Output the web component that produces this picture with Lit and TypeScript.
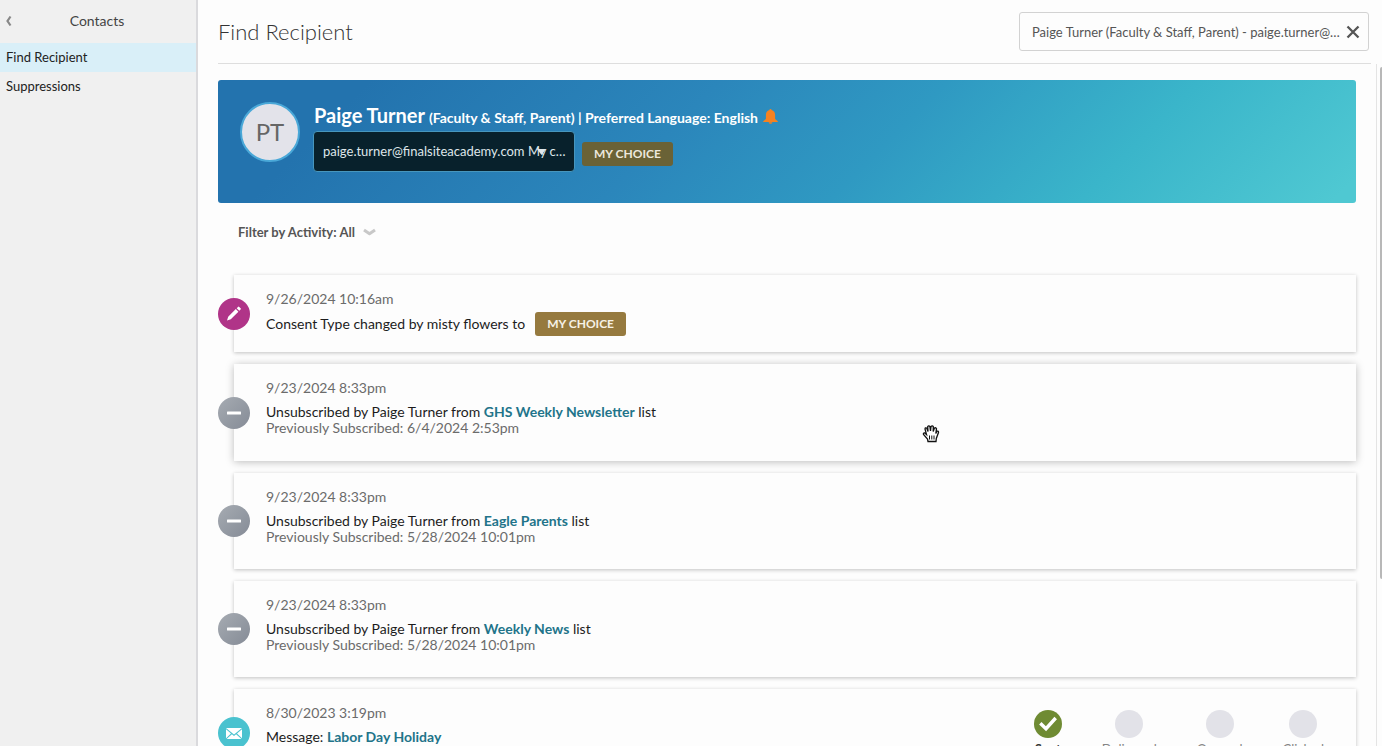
import { LitElement, html, css, svg, nothing } from "lit";
import { customElement, property } from "lit/decorators.js";

type Activity = {
  kind: "edit" | "minus" | "mail";
  date: string;
  before: string;
  link?: string;
  after?: string;
  badge?: string;
  previous?: string;
  raised?: boolean;
  steps?: { label: string; done: boolean }[];
};

const activities: Activity[] = [
  { kind: "edit", date: "9/26/2024 10:16am", before: "Consent Type changed by misty flowers to", badge: "MY CHOICE" },
  { kind: "minus", date: "9/23/2024 8:33pm", before: "Unsubscribed by Paige Turner from ", link: "GHS Weekly Newsletter", after: " list", previous: "6/4/2024 2:53pm", raised: true },
  { kind: "minus", date: "9/23/2024 8:33pm", before: "Unsubscribed by Paige Turner from ", link: "Eagle Parents", after: " list", previous: "5/28/2024 10:01pm" },
  { kind: "minus", date: "9/23/2024 8:33pm", before: "Unsubscribed by Paige Turner from ", link: "Weekly News", after: " list", previous: "5/28/2024 10:01pm" },
  {
    kind: "mail", date: "8/30/2023 3:19pm", before: "Message: ", link: "Labor Day Holiday",
    steps: [
      { label: "Sent", done: true },
      { label: "Delivered", done: false },
      { label: "Opened", done: false },
      { label: "Clicked", done: false },
    ],
  },
];

const icons = {
  edit: svg`<path fill="#fff" d="M9 22.500l1.200-3.800 7.600-7.600 2.600 2.600-7.600 7.600zM18.700 10.200l1.300-1.300q.6-.6 1.200 0l1.400 1.400q.6.6 0 1.200l-1.300 1.300z"/>`,
  minus: svg`<rect x="9" y="14.500" width="14" height="3" rx="0.5" fill="#fff"/>`,
  mail: svg`<path fill="#fff" d="M8 11h16l-8 6.600zM8 12.300l5 4.300-5 4.600zM24 12.300v8.900l-5-4.600zM8.600 22l5.300-4.700 2.100 1.800 2.100-1.800 5.300 4.700z"/>`,
};

@customElement("activity-card")
class ActivityCard extends LitElement {
  @property({ attribute: false }) item!: Activity;

  static styles = css`
    :host { display: block; position: relative; padding-left: 16px; }
    .card {
      display: flex;
      justify-content: space-between;
      box-sizing: border-box;
      padding: 15px 32px 16px;
      background: #fdfdfd;
      box-shadow: 0 1px 4px rgba(0, 0, 0, 0.24);
    }
    .card.roomy { padding-bottom: 24px; }
    .card.raised { padding-bottom: 25px; box-shadow: 0 1px 8px rgba(0, 0, 0, 0.26); }
    .marker { position: absolute; left: 0; top: calc(50% - 16px); width: 32px; height: 32px; border-radius: 50%; }
    .marker svg { display: block; width: 32px; height: 32px; }
    .edit { background: #b03488; }
    .minus { background: linear-gradient(135deg, #a6abb2, #858b96); }
    .mail { background: #4ac2cf; }
    .date { margin: 0; line-height: 18px; color: #6b6b6b; }
    .line { display: flex; margin: 7px 0 0; line-height: 16px; color: #1c1c1c; white-space: pre; }
    .line.badged { margin-top: 4px; line-height: 24px; }
    .previous { margin: 0; line-height: 16px; color: #6b6b6b; }
    a { color: #22748a; font-weight: 700; text-decoration: none; }
    .badge { margin-left: 10px; padding: 0 12px; font-size: 12px; font-weight: 700; color: #f6f1e6; background: #967a3f; border-radius: 3px; }
    .steps { display: flex; gap: 40px; list-style: none; margin: 0; padding: 6px 0 2px; font-size: 13px; line-height: 18px; color: #858585; }
    .steps li { display: flex; flex-direction: column; align-items: center; gap: 2px; }
    .dot { width: 28px; height: 28px; border-radius: 50%; background: #e2e2e8; }
    .dot svg { display: block; }
    .steps .done { color: #333; font-weight: 700; }
    .done .dot { background: #6f8b33; }
  `;

  render() {
    const i = this.item;
    return html`
      <article class="card ${i.previous ? "roomy" : ""} ${i.raised ? "raised" : ""}">
        <div>
          <p class="date">${i.date}</p>
          <p class="line ${i.badge ? "badged" : ""}">${i.before}${i.link ? html`<a href="#">${i.link}</a>` : nothing}${i.after ?? nothing}${i.badge ? html`<span class="badge">${i.badge}</span>` : nothing}</p>
          ${i.previous ? html`<p class="previous">Previously Subscribed: ${i.previous}</p>` : nothing}
        </div>
        ${i.steps ? html`<ul class="steps">${i.steps.map((s) => html`
          <li class=${s.done ? "done" : ""}>
            <span class="dot">${s.done ? html`<svg width="28" height="28" viewBox="0 0 28 28"><path d="M6.300 13.200l5.700 5.500L21.700 8" fill="none" stroke="#fff" stroke-width="3.400"/></svg>` : nothing}</span>
            <span>${s.label}</span>
          </li>`)}</ul>` : nothing}
      </article>
      <span class="marker ${i.kind}"><svg viewBox="0 0 32 32">${icons[i.kind]}</svg></span>
    `;
  }
}

@customElement("app-root")
class AppRoot extends LitElement {
  static styles = css`
    :host {
      display: grid;
      grid-template-columns: 198px minmax(0, 1fr);
      height: 100vh;
      overflow: hidden;
      background: #fdfdfd;
      color: #333;
      font: 14px/20px Lato, "Liberation Sans", sans-serif;
    }
    button, input, select { font: inherit; color: inherit; border: 0; background: none; padding: 0; margin: 0; appearance: none; }
    aside { background: #f0f0f0; border-right: 2px solid #dadadd; }
    .side-head { display: grid; grid-template-columns: 16px 1fr 18px; align-items: center; height: 42px; padding-bottom: 1px; }
    .side-head h2 { margin: 0; font-size: 14px; line-height: 20px; font-weight: 400; text-align: center; color: #444; }
    .back { padding-left: 5px; }
    .back svg { display: block; }
    nav { font-size: 13px; }
    nav a { display: block; padding: 4px 6px 5px; color: #222; text-decoration: none; }
    nav a.current { background: #d9eff8; }
    main { display: flex; flex-direction: column; min-height: 0; }
    header { display: flex; align-items: center; justify-content: space-between; height: 63px; margin: 0 11px 0 20px; border-bottom: 1px solid #dedede; }
    h1 { margin: 0; font-size: 22px; line-height: 30px; font-weight: 300; }
    .search { display: flex; align-items: center; gap: 4px; box-sizing: border-box; width: 350px; height: 39px; margin-right: 2px; padding: 0 8px 0 12px; border: 1px solid #d2d2d2; border-radius: 3px; }
    .search input { flex: 1; min-width: 0; height: 36px; color: #555; font-size: 13px; text-overflow: ellipsis; }
    .search svg { display: block; }
    .body { flex: 1; display: flex; justify-content: space-between; min-height: 0; }
    .content { flex: 1; min-width: 0; padding: 16px 20px 0; overflow: hidden; }
    .track { width: 5px; border-left: 1px solid #e4e4e4; display: flex; justify-content: flex-end; }
    .thumb { width: 2px; height: 75%; margin-top: 3px; background: #b8b8b8; border-radius: 2px 0 0 2px; }
    .banner { display: flex; gap: 13px; box-sizing: border-box; height: 123px; padding: 22px; border-radius: 3px; background: linear-gradient(135deg, #2373ae 12%, #2b86bb 40%, #2f99c2 58%, #3ab5ca 78%, #4fc8d2 98%); color: #fff; }
    .avatar { box-sizing: border-box; width: 60px; height: 60px; border: 2px solid #4aa8d8; border-radius: 50%; background: #e3e3ea; color: #666; font-size: 24px; line-height: 56px; text-align: center; }
    .who { margin: 0; padding-left: 1px; font-size: 14px; font-weight: 700; line-height: 27px; display: flex; align-items: baseline; gap: 4px; }
    .name { font-size: 20px; }
    .contact { display: flex; align-items: center; gap: 7px; }
    .mailbox { position: relative; }
    .mailbox select { display: block; box-sizing: border-box; width: 262px; height: 41px; padding: 0 5px 2px 9px; border: 1px solid #4796bd; border-radius: 4px; background: #08212c; color: #dfe6ea; font-size: 13px; text-overflow: ellipsis; overflow: hidden; white-space: nowrap; }
    .mailbox svg { position: absolute; right: 29px; top: 17px; pointer-events: none; }
    .badge { margin-top: 4px; padding: 0 12px; line-height: 24px; font-size: 12px; font-weight: 700; color: #ece8dc; background: #6a6236; border-radius: 3px; }
    .bell { align-self: center; margin-left: 1px; }
    .filter { display: flex; align-items: center; gap: 3px; margin: 19px 0 33px 20px; font-size: 13px; font-weight: 700; color: #555; }
    .filter svg { margin-left: 5px; }
    .feed { display: flex; flex-direction: column; gap: 12px; }
    .hand { position: absolute; left: 922px; top: 424px; pointer-events: none; }
  `;

  render() {
    return html`
      <aside>
        <div class="side-head">
          <button class="back" aria-label="Back"><svg width="8" height="12" viewBox="0 0 8 12"><path d="M5.500 1.500L2.500 6L5.500 10.500" fill="none" stroke="#888" stroke-width="2.200"/></svg></button>
          <h2>Contacts</h2>
        </div>
        <nav><a class="current" href="#">Find Recipient</a><a href="#">Suppressions</a></nav>
      </aside>
      <main>
        <header>
          <h1>Find Recipient</h1>
          <div class="search">
            <input type="text" aria-label="Recipient" value="Paige Turner (Faculty &amp; Staff, Parent) - paige.turner@finalsiteacademy.com" />
            <button aria-label="Clear"><svg width="14" height="14" viewBox="0 0 14 14"><path d="M1.500 1.500l11 11M12.500 1.500l-11 11" stroke="#555" stroke-width="2.300"/></svg></button>
          </div>
        </header>
        <div class="body">
          <div class="content">
            <section class="banner">
              <div class="avatar">PT</div>
              <div>
                <p class="who"><span class="name">Paige Turner</span><span>(Faculty &amp; Staff, Parent) | Preferred Language: English</span>
                  <svg class="bell" width="15" height="15" viewBox="0 0 15 15"><path fill="#f58220" d="M7.500 0q1 0 1.100 1.100Q12 2 12.100 6v4l2.700 2.200v.8H.2v-.8L2.900 10V6Q3 2 6.400 1.100 6.500 0 7.500 0zM5.500 13.200h4q-.5 1.600-2 1.600t-2-1.600z"/></svg>
                </p>
                <div class="contact">
                  <div class="mailbox">
                    <select aria-label="Email address"><option>paige.turner@finalsiteacademy.com My choice</option></select>
                    <svg width="9" height="8" viewBox="0 0 9 8"><path d="M0 1h9L4.500 7z" fill="#dfe6ea"/></svg>
                  </div>
                  <span class="badge">MY CHOICE</span>
                </div>
              </div>
            </section>
            <div class="filter">
              <label for="activity">Filter by Activity:</label>
              <select id="activity"><option>All</option></select>
              <svg width="13" height="8" viewBox="0 0 13 8"><path d="M1 2L6.500 5.800L12 2" fill="none" stroke="#c8c8c8" stroke-width="3" stroke-linejoin="round"/></svg>
            </div>
            <section class="feed">${activities.map((a) => html`<activity-card .item=${a}></activity-card>`)}</section>
          </div>
          <div class="track"><div class="thumb"></div></div>
        </div>
      </main>
      <svg class="hand" width="18" height="19" viewBox="0 0 18 19"><path d="M6 17.500L5.500 15 1.500 10.500Q1 8.700 2.800 9l1.700 1.500L3 5Q3.200 3.300 4.700 4L6 7.500 5.700 2.700Q6.700 1.200 7.900 2.500L8.500 7 9 2.500Q10.300 1.200 11.300 2.700L11.200 7.500 12.400 4Q14 3.200 14.500 4.800L13.800 9.500 15 7.200Q16.700 6.800 16.500 8.500L14.300 14.500 14 17.500z" fill="#fff" stroke="#111" stroke-width="1.300"/><path d="M7.500 11.500v4M9.800 11.500v4M12 11.500v4" stroke="#111" stroke-width="1"/></svg>
    `;
  }
}
